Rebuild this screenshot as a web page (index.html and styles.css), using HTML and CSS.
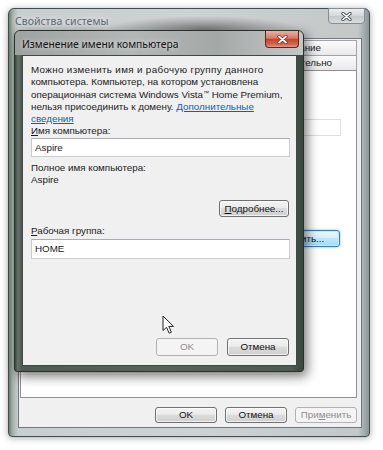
FILE: index.html
```html
<!DOCTYPE html>
<html lang="ru">
<head>
    <meta charset="UTF-8">
    <title>Свойства системы</title>
    <link rel="stylesheet" href="styles.css">
</head>
<body>
<div class="screen">
    <div class="window">
        <div class="titlebar">
            <span class="title">Свойства системы</span>
            <span class="close close-gray">
                <svg width="11" height="9" viewBox="0 0 11 9">
                    <path d="M2 1.5 L9 7.5 M9 1.5 L2 7.5" stroke="#4c5660" stroke-width="3.4" stroke-linecap="round"/>
                    <path d="M2 1.5 L9 7.5 M9 1.5 L2 7.5" stroke="#fff" stroke-width="1.6" stroke-linecap="round"/>
                </svg>
            </span>
        </div>
        <div class="client">
            <div class="tabs">
                <div class="tab-row">
                    <span class="tab tab-hw">Оборудование</span>
                </div>
                <div class="tab-row front">
                    <span class="tab tab-adv">Дополнительно</span>
                </div>
            </div>
            <div class="panel">
                <div class="field desc-field"></div>
                <button class="btn btn-focus">Изменить...</button>
            </div>
            <div class="btn-row">
                <button class="btn">OK</button>
                <button class="btn">Отмена</button>
                <button class="btn" disabled>При<u>м</u>енить</button>
            </div>
        </div>
    </div>

    <div class="dialog">
        <div class="dlg-titlebar">
            <span class="dlg-title">Изменение имени компьютера</span>
            <span class="close close-red">
                <svg width="11" height="9" viewBox="0 0 11 9">
                    <path d="M2 1.5 L9 7.5 M9 1.5 L2 7.5" stroke="#7a2a1c" stroke-width="3.4" stroke-linecap="round"/>
                    <path d="M2 1.5 L9 7.5 M9 1.5 L2 7.5" stroke="#fff" stroke-width="1.8" stroke-linecap="round"/>
                </svg>
            </span>
        </div>
        <div class="dlg-client">
            <p class="intro">
                <span class="wide">Можно изменить имя и рабочую группу данного</span><br>
                компьютера. Компьютер, на котором установлена<br>
                операционная система Windows Vista<span class="tm">™</span> Home Premium,<br>
                нельзя присоединить к домену. <a href="#">Дополнительные<br>сведения</a>
            </p>
            <label class="label"><u>И</u>мя компьютера:</label>
            <div class="field">Aspire</div>
            <div class="label full-label">Полное имя компьютера:</div>
            <div class="label">Aspire</div>
            <div class="more-row">
                <button class="btn btn-more"><u>П</u>одробнее...</button>
            </div>
            <label class="label group-label"><u>Р</u>абочая группа:</label>
            <div class="field group-field">HOME</div>
            <div class="dlg-buttons">
                <button class="btn" disabled>OK</button>
                <button class="btn">Отмена</button>
            </div>
        </div>
    </div>

    <svg class="cursor" width="13" height="20" viewBox="0 0 13 20">
        <path d="M1 1 L1 15.5 L4.5 12.3 L7.2 18.2 L9.4 17.2 L6.8 11.4 L11.5 11.4 Z" fill="#fff" stroke="#222" stroke-width="1" stroke-linejoin="round"/>
    </svg>
</div>
</body>
</html>
```

FILE: styles.css
```css
body {
    margin: 0;
    background: #fff;
    font-family: "Liberation Sans", "Noto Sans", sans-serif;
    font-size: 9.8px;
    color: #1b1b1b;
}

.screen {
    position: relative;
    width: 383px;
    height: 450px;
    overflow: hidden;
}

/* outer window: Свойства системы (inactive) */
.window {
    margin: 8px 0 0 8px;
    width: 362px;
    height: 429px;
    box-sizing: border-box;
    border: 1px solid #404d55;
    border-radius: 6px 6px 4px 4px;
    background:
        radial-gradient(ellipse 95px 13px at 195px 20px, rgba(60, 60, 60, 0.55), rgba(60, 60, 60, 0)),
        linear-gradient(90deg, #6f7f74 0, #a9b4ad 4px, #c9cdcd 9px, #cfd2d3 50%, #c3c7c8 97%, #8c9596 100%);
    box-shadow: 0 1px 7px rgba(0, 0, 0, 0.35);
    display: flex;
    flex-direction: column;
}

.titlebar {
    height: 29px;
    display: flex;
    justify-content: space-between;
    align-items: flex-start;
    padding-left: 6px;
}

.title {
    margin-top: 5px;
    font-family: "Noto Sans", sans-serif;
    font-size: 10.5px;
    color: #5d6a72;
    text-shadow: 0 0 6px #fff;
}

.close {
    display: flex;
    align-items: center;
    justify-content: center;
    box-sizing: border-box;
    border-radius: 0 0 4px 4px;
}

.close-gray {
    width: 37px;
    height: 16px;
    margin: -1px 4px 0 0;
    border: 1px solid #868e94;
    background: linear-gradient(#eceeef, #d3d7d9 50%, #c4c9cc 51%, #d9dcde);
}

.client {
    flex: 1;
    margin: 0 7px 8px 9px;
    border: 1px solid #6f7a80;
    background: #f0f0f0;
    padding: 1px 4px 0 1px;
    display: flex;
    flex-direction: column;
}

.tabs {
    height: 30px;
    display: flex;
    flex-direction: column;
}

.tab-row {
    height: 15px;
    display: flex;
    justify-content: flex-end;
}

.tab {
    box-sizing: border-box;
    border: 1px solid #a0a3a8;
    border-bottom: none;
    background: linear-gradient(#fbfbfb, #e9e9e9);
    padding-top: 1px;
    line-height: 12px;
    white-space: nowrap;
    text-align: right;
}

.tab-hw {
    width: 150px;
    padding-right: 35px;
}

.tab-adv {
    width: 150px;
    padding-right: 24px;
}

.panel {
    flex: 1;
    box-sizing: border-box;
    border: 1px solid #8d9096;
    background: #fff;
    padding: 48px 15px 0 0;
    display: flex;
    flex-direction: column;
    align-items: flex-end;
}

.field {
    box-sizing: border-box;
    height: 19px;
    border: 1px solid #c9ccd2;
    border-top-color: #abadb3;
    background: #fff;
    padding: 0 3px;
    line-height: 17px;
    align-self: stretch;
}

.desc-field {
    height: 17px;
    margin-left: 100px;
    border-color: #dcdfe3;
}

.btn {
    box-sizing: border-box;
    width: 62px;
    height: 17px;
    padding: 0;
    border: 1px solid #707070;
    border-radius: 3px;
    background: linear-gradient(#f3f3f3, #ebebeb 45%, #dcdcdc 50%, #cfcfcf);
    box-shadow: inset 0 0 0 1px rgba(255, 255, 255, 0.7);
    font-family: inherit;
    font-size: 9.8px;
    color: #111;
    line-height: 14px;
}

.btn[disabled] {
    border-color: #aeb2b5;
    background: #f4f4f4;
    color: #8d8d8d;
    box-shadow: none;
}

.btn-focus {
    width: 84px;
    margin: 94px 1px 0 0;
    border-color: #3c7fb1;
    background: linear-gradient(#eaf6fd, #d9f0fc 45%, #bee6fd 50%, #a7d9f5);
    box-shadow: 0 0 3px #6ec7f0, inset 0 0 0 1px #c8ecfc;
}

.btn-row {
    height: 16px;
    margin: 9px 0 4px;
    display: flex;
    justify-content: flex-end;
    gap: 8px;
}

.btn-row .btn {
    height: 16px;
}

/* dialog: Изменение имени компьютера */
.dialog {
    position: absolute;
    left: 14px;
    top: 30px;
    width: 290px;
    height: 342px;
    box-sizing: border-box;
    border: 1px solid #26312c;
    border-radius: 6px 6px 3px 3px;
    background: linear-gradient(90deg, #3c4943 0, #66736b 3px, #4f5b55 6px, #57625c 50%, #4e5a54 96%, #3a4540 100%);
    box-shadow: 3px 4px 12px rgba(0, 0, 0, 0.55);
    display: flex;
    flex-direction: column;
}

.dlg-titlebar {
    height: 24px;
    display: flex;
    justify-content: space-between;
    align-items: flex-start;
    padding-left: 7px;
    background: linear-gradient(90deg, #9ea3a2, #b3b7b6 40%, #a4a9a8 70%, #c4c7c7);
    border-radius: 5px 5px 0 0;
}

.dlg-title {
    margin-top: 6px;
    font-family: "Noto Sans", sans-serif;
    font-size: 10.3px;
    color: #111;
    text-shadow: 0 0 5px rgba(255, 255, 255, 0.8);
}

.close-red {
    width: 34px;
    height: 17px;
    margin-right: 4px;
    border: 1px solid #6a2216;
    border-top: none;
    background: linear-gradient(#eab0a3, #d77a64 45%, #c4432b 52%, #d36a50 85%, #e59a84);
}

.dlg-client {
    flex: 1;
    margin: 0 6px 5px 7px;
    border: 1px solid #3d4843;
    background: #f0f0f0;
    padding: 8px 6px 9px 8px;
    display: flex;
    flex-direction: column;
    line-height: 12.3px;
}

.intro {
    margin: 0;
    white-space: nowrap;
}

.intro .wide {
    letter-spacing: 0.35px;
}

.intro .tm {
    font-size: 6px;
    line-height: 0;
    vertical-align: 3px;
}

.intro a {
    color: #0a5fb4;
}

.label {
    display: block;
}

.full-label {
    margin-top: 5px;
}

.more-row {
    margin-top: 14px;
    display: flex;
    justify-content: flex-end;
}

.btn-more {
    width: 70px;
    margin-right: 1px;
}

.group-label {
    margin-top: 8px;
}

.group-field {
    margin-top: 1px;
    height: 20px;
    line-height: 18px;
}

.dlg-buttons {
    margin-top: auto;
    display: flex;
    justify-content: flex-end;
    gap: 9px;
    padding-right: 1px;
}

.dlg-buttons .btn {
    height: 18px;
}

.cursor {
    position: absolute;
    left: 162px;
    top: 315px;
}
```
